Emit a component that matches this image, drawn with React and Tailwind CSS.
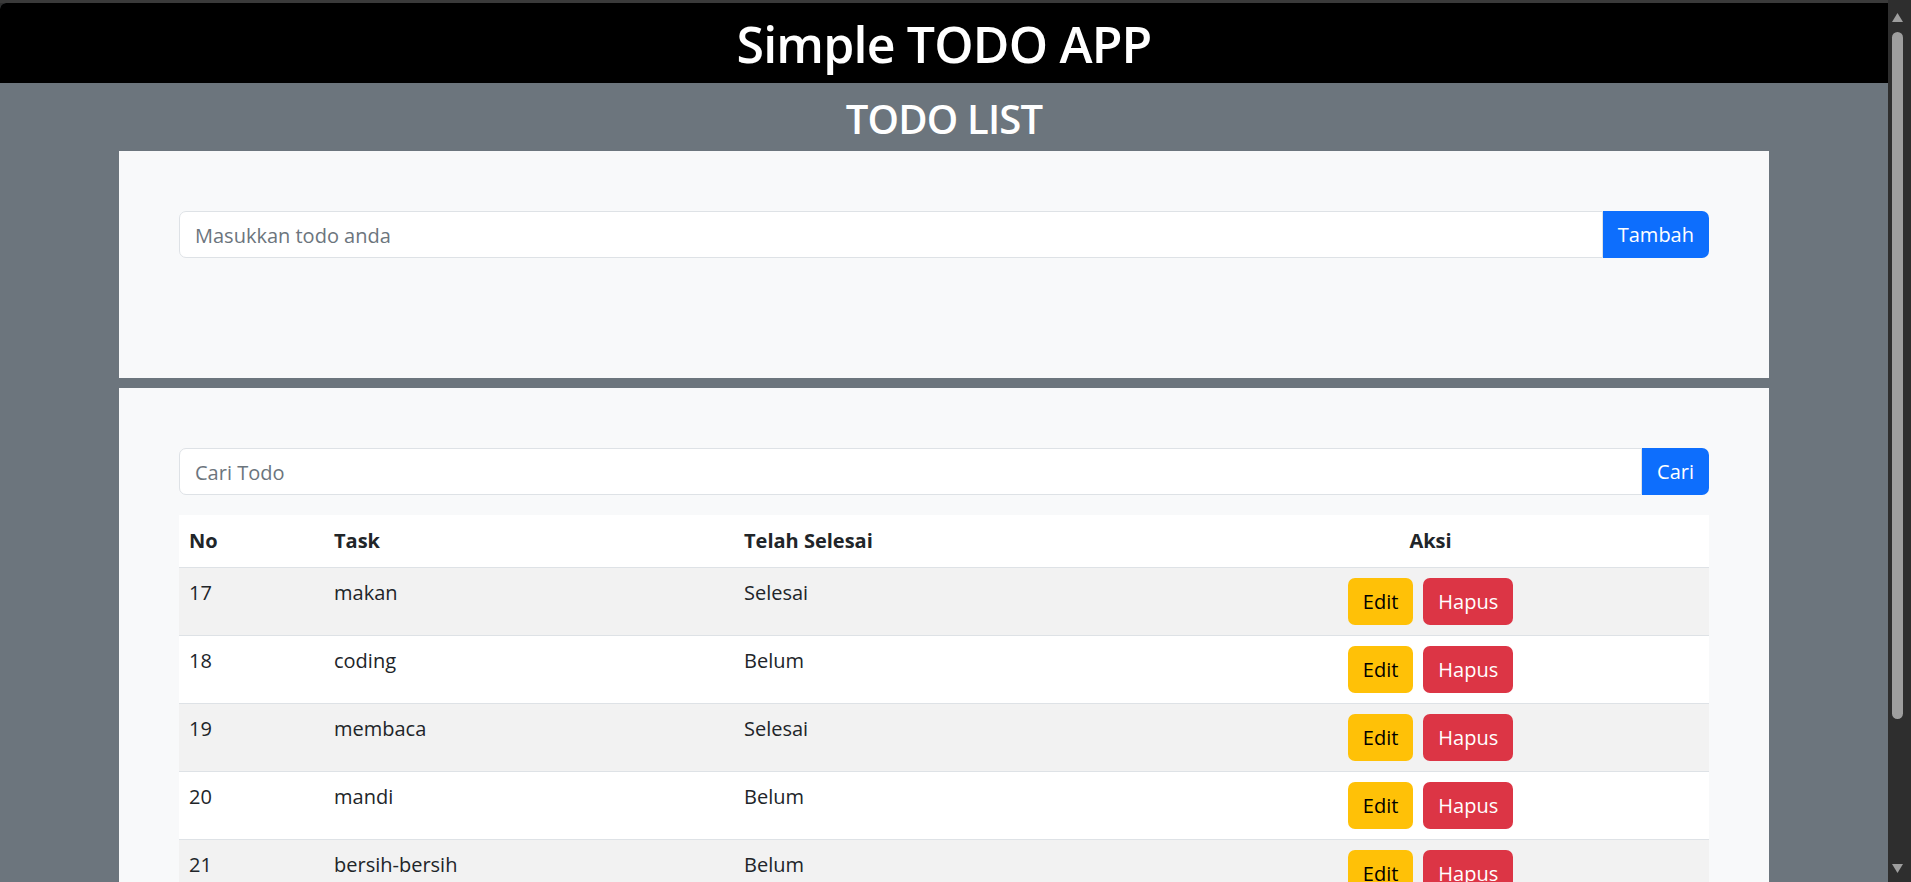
import React from 'react';

const todos = [
  { id: 17, task: 'makan', done: true },
  { id: 18, task: 'coding', done: false },
  { id: 19, task: 'membaca', done: true },
  { id: 20, task: 'mandi', done: false },
  { id: 21, task: 'bersih-bersih', done: false },
];

const ScrollBar = () => (
  <div className="w-[23px] h-full bg-[#2e2e2e] flex flex-col pl-[4px]">
    {/* up arrow */}
    <svg className="mt-[13px] w-[11px] h-[9px]" viewBox="0 0 11 9">
      <path d="M5.5 0 L11 9 L0 9 Z" fill="#9e9e9e" />
    </svg>
    {/* thumb */}
    <div className="mt-[10px] w-[11px] h-[687px] rounded-full bg-[#9e9e9e]" />
    {/* down arrow */}
    <svg className="mt-auto mb-[9px] w-[11px] h-[9px]" viewBox="0 0 11 9">
      <path d="M0 0 L11 0 L5.5 9 Z" fill="#9e9e9e" />
    </svg>
  </div>
);

export default function App() {
  return (
    <div
      className="h-[882px] w-full overflow-hidden flex bg-[#2e2e2e]"
      style={{ fontFamily: '"Open Sans", "Noto Sans", sans-serif' }}
    >
      <div className="flex-1 min-w-0 flex flex-col">
        <div className="h-[3px] bg-[#3a3a3a]" />
        <div className="flex-1 bg-[#6c757d] rounded-tl-[6px] overflow-hidden">
          {/* Header */}
          <header className="bg-black text-white text-center pt-[11px] pb-[9px]">
            <h1 className="text-[50px] leading-[60px] font-semibold tracking-[-0.8px]">Simple TODO APP</h1>
          </header>

          <h2 className="text-white text-center text-[40px] leading-[48px] font-semibold tracking-[-0.8px] mt-[12px] mb-[8px]">
            TODO LIST
          </h2>

          <div className="w-[1650px] mx-auto text-[20px] leading-[30px] text-[#212529]">
            {/* Add form */}
            <div className="bg-[#f8f9fa] px-[60px] pt-[60px] pb-[120px]">
              <div className="flex h-[47px]">
                <input
                  className="flex-1 min-w-0 bg-white border border-[#dee2e6] rounded-l-[7px] px-[15px] pt-[2px] outline-none placeholder:text-[#6c757d]"
                  placeholder="Masukkan todo anda"
                />
                <button className="bg-[#0d6efd] text-white px-[15px] rounded-r-[7px]">Tambah</button>
              </div>
            </div>

            {/* List */}
            <div className="bg-[#f8f9fa] px-[60px] pt-[60px] pb-[60px] mt-[10px]">
              <div className="flex h-[47px] mb-[20px]">
                <input
                  className="flex-1 min-w-0 bg-white border border-[#dee2e6] rounded-l-[7px] px-[15px] pt-[2px] outline-none placeholder:text-[#6c757d]"
                  placeholder="Cari Todo"
                />
                <button className="bg-[#0d6efd] text-white px-[15px] rounded-r-[7px]">Cari</button>
              </div>

              <table className="w-full table-fixed border-collapse bg-white">
                <thead>
                  <tr className="border-b border-[#dee2e6]">
                    <th className="w-[145px] text-left font-bold px-[10px] pt-[11px] pb-[11px]">No</th>
                    <th className="w-[410px] text-left font-bold px-[10px] pt-[11px] pb-[11px]">Task</th>
                    <th className="w-[418px] text-left font-bold px-[10px] pt-[11px] pb-[11px]">Telah Selesai</th>
                    <th className="text-center font-bold px-[10px] pt-[11px] pb-[11px]">Aksi</th>
                  </tr>
                </thead>
                <tbody>
                  {todos.map((t, i) => (
                    <tr
                      key={t.id}
                      className={`border-b border-[#dee2e6] ${i % 2 === 0 ? 'bg-[#f2f2f2]' : 'bg-white'}`}
                    >
                      <td className="align-top px-[10px] py-[10px]">{t.id}</td>
                      <td className="align-top px-[10px] py-[10px]">{t.task}</td>
                      <td className="align-top px-[10px] py-[10px]">{t.done ? 'Selesai' : 'Belum'}</td>
                      <td className="align-top px-[10px] py-[10px]">
                        <div className="flex justify-center gap-[10px]">
                          <button className="h-[47px] px-[15px] rounded-[7px] bg-[#ffc107] text-black">Edit</button>
                          <button className="h-[47px] px-[15px] rounded-[7px] bg-[#dc3545] text-white">Hapus</button>
                        </div>
                      </td>
                    </tr>
                  ))}
                </tbody>
              </table>
            </div>
          </div>
        </div>
      </div>
      <ScrollBar />
    </div>
  );
}
